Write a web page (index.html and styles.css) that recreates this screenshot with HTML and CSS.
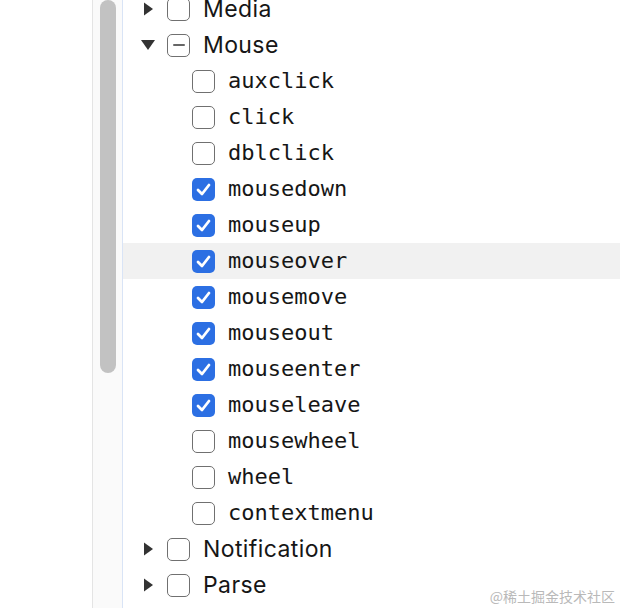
FILE: index.html
```html
<!DOCTYPE html>
<html>
<head>
<meta charset="utf-8">
<link rel="stylesheet" href="styles.css">
</head>
<body>
<div class="page">
  <div class="left"></div>
  <div class="scrollbar"><div class="thumb"></div></div>
  <div class="tree">
    <div class="row parent">
      <svg class="tri" width="14" height="14" viewBox="0 0 14 14"><path d="M3 0.5 L12 7 L3 13.5 Z" fill="#333"/></svg>
      <span class="cb"></span><span class="plabel">Media</span>
    </div>
    <div class="row parent">
      <svg class="tri" width="14" height="14" viewBox="0 0 14 14"><path d="M0 2 L14 2 L7 12 Z" fill="#333"/></svg>
      <span class="cb ind"><span class="dash"></span></span><span class="plabel">Mouse</span>
    </div>
    <div class="row child"><span class="cb"></span><span class="clabel">auxclick</span></div>
    <div class="row child"><span class="cb"></span><span class="clabel">click</span></div>
    <div class="row child"><span class="cb"></span><span class="clabel">dblclick</span></div>
    <div class="row child"><span class="cb on"><svg width="23" height="23" viewBox="0 0 23 23"><path d="M6 12 L10 16 L17 7" fill="none" stroke="#fff" stroke-width="2.8" stroke-linecap="round" stroke-linejoin="round"/></svg></span><span class="clabel">mousedown</span></div>
    <div class="row child"><span class="cb on"><svg width="23" height="23" viewBox="0 0 23 23"><path d="M6 12 L10 16 L17 7" fill="none" stroke="#fff" stroke-width="2.8" stroke-linecap="round" stroke-linejoin="round"/></svg></span><span class="clabel">mouseup</span></div>
    <div class="row child hover"><span class="cb on"><svg width="23" height="23" viewBox="0 0 23 23"><path d="M6 12 L10 16 L17 7" fill="none" stroke="#fff" stroke-width="2.8" stroke-linecap="round" stroke-linejoin="round"/></svg></span><span class="clabel">mouseover</span></div>
    <div class="row child"><span class="cb on"><svg width="23" height="23" viewBox="0 0 23 23"><path d="M6 12 L10 16 L17 7" fill="none" stroke="#fff" stroke-width="2.8" stroke-linecap="round" stroke-linejoin="round"/></svg></span><span class="clabel">mousemove</span></div>
    <div class="row child"><span class="cb on"><svg width="23" height="23" viewBox="0 0 23 23"><path d="M6 12 L10 16 L17 7" fill="none" stroke="#fff" stroke-width="2.8" stroke-linecap="round" stroke-linejoin="round"/></svg></span><span class="clabel">mouseout</span></div>
    <div class="row child"><span class="cb on"><svg width="23" height="23" viewBox="0 0 23 23"><path d="M6 12 L10 16 L17 7" fill="none" stroke="#fff" stroke-width="2.8" stroke-linecap="round" stroke-linejoin="round"/></svg></span><span class="clabel">mouseenter</span></div>
    <div class="row child"><span class="cb on"><svg width="23" height="23" viewBox="0 0 23 23"><path d="M6 12 L10 16 L17 7" fill="none" stroke="#fff" stroke-width="2.8" stroke-linecap="round" stroke-linejoin="round"/></svg></span><span class="clabel">mouseleave</span></div>
    <div class="row child"><span class="cb"></span><span class="clabel">mousewheel</span></div>
    <div class="row child"><span class="cb"></span><span class="clabel">wheel</span></div>
    <div class="row child"><span class="cb"></span><span class="clabel">contextmenu</span></div>
    <div class="row parent">
      <svg class="tri" width="14" height="14" viewBox="0 0 14 14"><path d="M3 0.5 L12 7 L3 13.5 Z" fill="#333"/></svg>
      <span class="cb"></span><span class="plabel">Notification</span>
    </div>
    <div class="row parent">
      <svg class="tri" width="14" height="14" viewBox="0 0 14 14"><path d="M3 0.5 L12 7 L3 13.5 Z" fill="#333"/></svg>
      <span class="cb"></span><span class="plabel">Parse</span>
    </div>
  </div>
  <div class="watermark">@稀土掘金技术社区</div>
</div>
</body>
</html>
```

FILE: styles.css
```css
html, body {
  margin: 0;
  padding: 0;
  background: #fff;
}
.page {
  position: relative;
  display: flex;
  width: 620px;
  height: 608px;
  overflow: hidden;
}
.left {
  width: 92px;
  flex: none;
  background: #fff;
}
.scrollbar {
  width: 29px;
  flex: none;
  background: #fafafa;
  border-left: 1px solid #e4e4e4;
  border-right: 1px solid #d9e4f6;
}
.thumb {
  margin: 0 0 0 7px;
  width: 16px;
  height: 373px;
  background: #c2c2c2;
  border-radius: 8px;
}
.tree {
  flex: 1;
  margin-top: -9px;
  display: flex;
  flex-direction: column;
}
.row {
  height: 36px;
  flex: none;
  display: flex;
  align-items: center;
}
.row.hover {
  background: #f1f1f1;
}
.parent {
  padding-left: 18px;
}
.child {
  padding-left: 69px;
}
.tri {
  flex: none;
  margin-right: 12px;
}
.cb {
  box-sizing: border-box;
  width: 23px;
  height: 23px;
  flex: none;
  border: 1.8px solid #707070;
  border-radius: 5px;
  background: #fff;
  display: flex;
  align-items: center;
  justify-content: center;
}
.cb.on {
  background: #2c6fe3;
  border: none;
}
.cb.on svg {
  display: block;
}
.dash {
  width: 12px;
  height: 2.5px;
  background: #666;
  border-radius: 1px;
}
.plabel {
  margin-left: 13px;
  font-family: "Inter", "Liberation Sans", sans-serif;
  font-size: 23px;
  letter-spacing: 0.4px;
  color: #161616;
}
.clabel {
  margin-left: 13px;
  margin-bottom: 2px;
  font-family: "DejaVu Sans Mono", monospace;
  font-size: 22px;
  color: #161616;
}
.watermark {
  position: absolute;
  right: 5px;
  bottom: 2px;
  font-family: "Noto Sans CJK SC", sans-serif;
  font-size: 14px;
  color: #b9b9b9;
}
```
